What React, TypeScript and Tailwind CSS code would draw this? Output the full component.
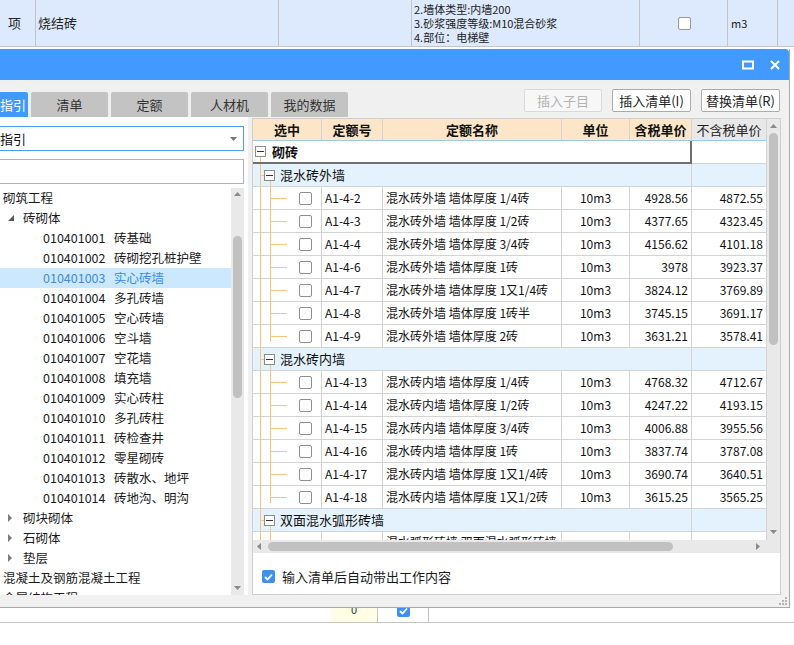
import React from 'react';

type Row = { code: string; name: string; unit: string; tax: string; noTax: string; tall?: boolean };

const codes: [string, string][] = [
  ['010401001', '砖基础'],
  ['010401002', '砖砌挖孔桩护壁'],
  ['010401003', '实心砖墙'],
  ['010401004', '多孔砖墙'],
  ['010401005', '空心砖墙'],
  ['010401006', '空斗墙'],
  ['010401007', '空花墙'],
  ['010401008', '填充墙'],
  ['010401009', '实心砖柱'],
  ['010401010', '多孔砖柱'],
  ['010401011', '砖检查井'],
  ['010401012', '零星砌砖'],
  ['010401013', '砖散水、地坪'],
  ['010401014', '砖地沟、明沟'],
];

const groups: { name: string; rows: Row[] }[] = [
  {
    name: '混水砖外墙',
    rows: [
      { code: 'A1-4-2', name: '混水砖外墙 墙体厚度 1/4砖', unit: '10m3', tax: '4928.56', noTax: '4872.55' },
      { code: 'A1-4-3', name: '混水砖外墙 墙体厚度 1/2砖', unit: '10m3', tax: '4377.65', noTax: '4323.45' },
      { code: 'A1-4-4', name: '混水砖外墙 墙体厚度 3/4砖', unit: '10m3', tax: '4156.62', noTax: '4101.18' },
      { code: 'A1-4-6', name: '混水砖外墙 墙体厚度 1砖', unit: '10m3', tax: '3978', noTax: '3923.37' },
      { code: 'A1-4-7', name: '混水砖外墙 墙体厚度 1又1/4砖', unit: '10m3', tax: '3824.12', noTax: '3769.89' },
      { code: 'A1-4-8', name: '混水砖外墙 墙体厚度 1砖半', unit: '10m3', tax: '3745.15', noTax: '3691.17' },
      { code: 'A1-4-9', name: '混水砖外墙 墙体厚度 2砖', unit: '10m3', tax: '3631.21', noTax: '3578.41' },
    ],
  },
  {
    name: '混水砖内墙',
    rows: [
      { code: 'A1-4-13', name: '混水砖内墙 墙体厚度 1/4砖', unit: '10m3', tax: '4768.32', noTax: '4712.67' },
      { code: 'A1-4-14', name: '混水砖内墙 墙体厚度 1/2砖', unit: '10m3', tax: '4247.22', noTax: '4193.15' },
      { code: 'A1-4-15', name: '混水砖内墙 墙体厚度 3/4砖', unit: '10m3', tax: '4006.88', noTax: '3955.56' },
      { code: 'A1-4-16', name: '混水砖内墙 墙体厚度 1砖', unit: '10m3', tax: '3837.74', noTax: '3787.08' },
      { code: 'A1-4-17', name: '混水砖内墙 墙体厚度 1又1/4砖', unit: '10m3', tax: '3690.74', noTax: '3640.51' },
      { code: 'A1-4-18', name: '混水砖内墙 墙体厚度 1又1/2砖', unit: '10m3', tax: '3615.25', noTax: '3565.25' },
    ],
  },
  {
    name: '双面混水弧形砖墙',
    rows: [
      {
        code: 'A1-4-20',
        name: '混水弧形砖墙 双面混水弧形砖墙 墙体厚度 1砖',
        unit: '10m3',
        tax: '4210.33',
        noTax: '4155.20',
        tall: true,
      },
    ],
  },
];

const LINE = '#f7c47c';

const MinusBox = () => (
  <div className="flex h-[11px] w-[11px] shrink-0 items-center justify-center border border-[#8c8c8c] bg-white">
    <div className="h-px w-[7px] bg-[#333]" />
  </div>
);

const Check = ({ checked }: { checked?: boolean }) =>
  checked ? (
    <div className="flex h-[13px] w-[13px] shrink-0 items-center justify-center rounded-[2px] bg-[#3f8ff0]">
      <svg width="9" height="8" viewBox="0 0 9 8">
        <path d="M1 4 L3.5 6.5 L8 1.5" stroke="white" strokeWidth="1.8" fill="none" />
      </svg>
    </div>
  ) : (
    <div className="h-[13px] w-[13px] shrink-0 rounded-[2px] border border-[#8f8f8f] bg-white" />
  );

const DataRow = ({ row, last }: { row: Row; last: boolean }) => (
  <div
    className={
      row.tall
        ? 'flex h-[40px] shrink-0 border-b border-[#d3d3d3] bg-white text-[12px] text-[#111]'
        : 'flex h-[23px] shrink-0 border-b border-[#d3d3d3] bg-white text-[12px] text-[#111]'
    }
  >
    <div className="relative flex w-[69px] items-center border-r border-[#d3d3d3] pl-[46px]">
      <svg className="absolute left-0 top-0" width="68" height="40">
        <line x1="7.5" y1="0" x2="7.5" y2="40" stroke={LINE} />
        <line x1="17.5" y1="0" x2="17.5" y2={last ? 11.5 : 40} stroke={LINE} />
        <line x1="17.5" y1={row.tall ? 20 : 11.5} x2="34" y2={row.tall ? 20 : 11.5} stroke={LINE} />
      </svg>
      <Check />
    </div>
    <div className="flex w-[61px] items-center border-r border-[#d3d3d3] pl-[3px]">{row.code}</div>
    <div
      className={
        row.tall
          ? 'flex w-[179px] items-start overflow-hidden border-r border-[#d3d3d3] pl-[3px] pt-[2px] leading-[15px]'
          : 'flex w-[179px] items-center overflow-hidden whitespace-nowrap border-r border-[#d3d3d3] pl-[3px]'
      }
    >
      {row.name}
    </div>
    <div className="flex w-[68px] items-center justify-center border-r border-[#d3d3d3]">{row.unit}</div>
    <div className="flex w-[62px] items-center justify-end border-r border-[#d3d3d3] pr-[3px]">{row.tax}</div>
    <div className="flex w-[75px] items-center justify-end border-r border-[#d3d3d3] pr-[3px]">{row.noTax}</div>
  </div>
);

const GroupRow = ({ name }: { name: string }) => (
  <div className="flex h-[23px] shrink-0 border-b border-[#d3d3d3] bg-[#e4f2fd] text-[13px] text-[#111]">
    <div className="relative flex w-[439px] items-center border-r border-[#d3d3d3] pl-[11px]">
      <svg className="absolute left-0 top-0" width="40" height="22">
        <line x1="7.5" y1="0" x2="7.5" y2="22" stroke={LINE} />
        <line x1="7.5" y1="11.5" x2="11" y2="11.5" stroke={LINE} />
        <line x1="17.5" y1="17" x2="17.5" y2="22" stroke={LINE} />
      </svg>
      <MinusBox />
      <span className="ml-[5px]">{name}</span>
    </div>
    <div className="w-[75px] border-r border-[#d3d3d3]" />
  </div>
);

const TreeArrowOpen = () => (
  <svg width="6" height="6" viewBox="0 0 6 6" className="shrink-0">
    <path d="M6 0 L6 6 L0 6 Z" fill="#595959" />
  </svg>
);

const TreeArrowClosed = () => (
  <svg width="4" height="8" viewBox="0 0 4 8" className="shrink-0">
    <path d="M0 0 L4 4 L0 8 Z" fill="#7a7a7a" />
  </svg>
);

const LeftPanel = () => (
  <div className="flex h-full w-[248px] flex-col bg-white">
    <div className="mt-[9px] flex h-[25px] w-[244px] items-center justify-between border border-l-0 border-[#4a9df2] pr-[6px] text-[13px] text-[#111]">
      <span>指引</span>
      <svg width="7" height="4" viewBox="0 0 7 4">
        <path d="M0 0 L7 0 L3.5 4 Z" fill="#777" />
      </svg>
    </div>
    <div className="mt-[8px] h-[25px] w-[244px] border border-l-0 border-[#b4b4b4] bg-white" />
    <div className="mt-[4px] flex min-h-0 w-[244px] flex-1">
      <div className="min-w-0 flex-1 overflow-hidden text-[12.5px] text-[#1a1a1a]">
        <div className="flex h-[20px] items-center pl-[3px]">砌筑工程</div>
        <div className="flex h-[20px] items-center pl-[8px]">
          <TreeArrowOpen />
          <span className="ml-[9px]">砖砌体</span>
        </div>
        {codes.map(([c, n]) => (
          <div
            key={c}
            className={
              c === '010401003'
                ? 'flex h-[20px] items-center bg-[#cce8ff] pl-[43px] text-[#3a8de2]'
                : 'flex h-[20px] items-center pl-[43px]'
            }
          >
            <span className="w-[71px] shrink-0">{c}</span>
            <span className="whitespace-nowrap">{n}</span>
          </div>
        ))}
        {['砌块砌体', '石砌体', '垫层'].map((t) => (
          <div key={t} className="flex h-[20px] items-center pl-[8px]">
            <TreeArrowClosed />
            <span className="ml-[11px]">{t}</span>
          </div>
        ))}
        <div className="flex h-[20px] items-center whitespace-nowrap pl-[3px]">混凝土及钢筋混凝土工程</div>
        <div className="flex h-[20px] items-center whitespace-nowrap pl-[3px]">金属结构工程</div>
      </div>
      <div className="flex w-[13px] flex-col items-center bg-[#e9e9e9]">
        <svg width="7" height="4" viewBox="0 0 7 4" className="mt-[4px]">
          <path d="M0 4 L7 4 L3.5 0 Z" fill="#8a8a8a" />
        </svg>
        <div className="mt-[40px] h-[162px] w-[9px] rounded-full bg-[#c1c1c1]" />
        <div className="flex-1" />
        <svg width="7" height="4" viewBox="0 0 7 4" className="mb-[5px]">
          <path d="M0 0 L7 0 L3.5 4 Z" fill="#8a8a8a" />
        </svg>
      </div>
    </div>
  </div>
);

const HeaderCell = ({ w, children, plain }: { w: string; children: React.ReactNode; plain?: boolean }) => (
  <div
    className={
      plain
        ? `${w} flex items-center justify-center border-r border-[#d3d3d3] bg-[#e8e8e8] text-[13px] text-[#222]`
        : `${w} flex items-center justify-center border-r border-[#d3d3d3] bg-[#fde6c8] text-[13px] font-bold text-[#111]`
    }
  >
    {children}
  </div>
);

const RightPanel = () => (
  <div className="mt-[1px] flex w-[529px] flex-col border border-[#cfcfcf] bg-white">
    <div className="flex h-[421px] shrink-0">
      <div className="flex w-[514px] flex-col overflow-hidden">
        <div className="flex h-[22px] shrink-0 border-b border-[#9cc9f3]">
          <HeaderCell w="w-[69px]">选中</HeaderCell>
          <HeaderCell w="w-[61px]">定额号</HeaderCell>
          <HeaderCell w="w-[179px]">定额名称</HeaderCell>
          <HeaderCell w="w-[68px]">单位</HeaderCell>
          <HeaderCell w="w-[62px]">含税单价</HeaderCell>
          <HeaderCell w="w-[75px]" plain>
            不含税单价
          </HeaderCell>
        </div>
        <div className="flex h-[23px] shrink-0 bg-white">
          <div className="relative flex w-[439px] items-center border-b-2 border-r-2 border-[#6f6f6f] pl-[2px]">
            <svg className="absolute left-0 top-0" width="20" height="21">
              <line x1="7.5" y1="16" x2="7.5" y2="21" stroke={LINE} />
            </svg>
            <MinusBox />
            <span className="ml-[6px] text-[13px] font-bold text-[#111]">砌砖</span>
          </div>
          <div className="w-[75px] border-b border-r border-[#d3d3d3]" />
        </div>
        {groups.map((g) => (
          <React.Fragment key={g.name}>
            <GroupRow name={g.name} />
            {g.rows.map((r, i) => (
              <DataRow key={r.code} row={r} last={i === g.rows.length - 1 && g.rows.length > 1} />
            ))}
          </React.Fragment>
        ))}
      </div>
      <div className="flex w-[13px] flex-col items-center bg-[#e9e9e9]">
        <svg width="7" height="4" viewBox="0 0 7 4" className="mt-[5px]">
          <path d="M0 4 L7 4 L3.5 0 Z" fill="#8a8a8a" />
        </svg>
        <div className="mt-[5px] h-[212px] w-[9px] rounded-full bg-[#c1c1c1]" />
        <div className="flex-1" />
        <svg width="7" height="4" viewBox="0 0 7 4" className="mb-[6px]">
          <path d="M0 0 L7 0 L3.5 4 Z" fill="#8a8a8a" />
        </svg>
      </div>
    </div>
    <div className="flex h-[13px] shrink-0 items-center bg-[#e9e9e9]">
      <svg width="4" height="7" viewBox="0 0 4 7" className="ml-[4px]">
        <path d="M4 0 L4 7 L0 3.5 Z" fill="#8a8a8a" />
      </svg>
      <div className="ml-[7px] h-[9px] w-[405px] rounded-full bg-[#c1c1c1]" />
      <div className="flex-1" />
      <svg width="4" height="7" viewBox="0 0 4 7" className="mr-[20px]">
        <path d="M0 0 L0 7 L4 3.5 Z" fill="#8a8a8a" />
      </svg>
    </div>
    <div className="flex flex-1 items-center gap-[7px] pl-[9px] pt-[6px] text-[13px] text-[#1a1a1a]">
      <Check checked />
      <span>输入清单后自动带出工作内容</span>
    </div>
  </div>
);

const Tab = ({ label }: { label: string }) => (
  <div className="flex h-[25px] w-[77px] items-center justify-center rounded-t-[2px] bg-[#c3c3c3] text-[13px] text-[#333]">
    {label}
  </div>
);

const Btn = ({ label, disabled }: { label: string; disabled?: boolean }) => (
  <div
    className={
      disabled
        ? 'flex h-[23px] w-[78px] items-center justify-center rounded-[2px] border border-[#dadada] bg-[#f7f7f7] text-[13px] text-[#b3b3b3]'
        : 'flex h-[23px] w-[79px] items-center justify-center rounded-[2px] border border-[#acacac] bg-white text-[13px] text-[#222]'
    }
  >
    {label}
  </div>
);

export default function App() {
  return (
    <div className="relative h-[645px] w-[794px] overflow-hidden bg-white font-['Noto_Sans_CJK_SC',sans-serif]">
      {/* background sheet */}
      <div className="flex h-[47px] border-b border-[#c4c4c4] bg-[#dde9fc] text-[#222]">
        <div className="flex w-[36px] items-center border-r border-[#c4c4c4] pl-[8px] text-[13px]">项</div>
        <div className="flex w-[243px] items-center border-r border-[#c4c4c4] pl-[2px] text-[13px]">烧结砖</div>
        <div className="w-[133px] border-r border-[#c4c4c4]" />
        <div className="flex w-[228px] flex-col justify-center border-r border-[#c4c4c4] pl-[2px] text-[11px] leading-[14px]">
          <span>2.墙体类型:内墙200</span>
          <span>3.砂浆强度等级:M10混合砂浆</span>
          <span>4.部位：电梯壁</span>
        </div>
        <div className="flex w-[88px] items-center justify-center border-r border-[#c4c4c4]">
          <div className="ml-[2px] h-[13px] w-[13px] rounded-[2px] border border-[#999] bg-white" />
        </div>
        <div className="flex w-[50px] items-center border-r border-[#c4c4c4] pl-[3px] text-[11px]">m3</div>
        <div className="flex-1" />
      </div>
      <div className="h-[553px]" />
      <div className="flex h-[23px] border-b border-[#c4c4c4] text-[11px] text-[#333]">
        <div className="w-[331px]" />
        <div className="flex w-[47px] items-end justify-center border-r border-[#c4c4c4] bg-[#fffde6] pb-[5px]">0</div>
        <div className="flex w-[51px] items-end justify-center border-r border-[#c4c4c4] pb-[5px]">
          <Check checked />
        </div>
      </div>

      {/* dialog */}
      <div className="absolute left-0 top-[49px] flex h-[559px] w-[790px] flex-col border-b border-r border-[#a9a9a9] bg-[#f0f0f0]">
        <div className="flex h-[31px] shrink-0 items-center justify-end rounded-tr-[4px] bg-[#4299ff] pr-[9px]">
          <svg width="12" height="10" viewBox="0 0 12 10" className="mr-[16px]">
            <rect x="1" y="1.5" width="10" height="7" stroke="white" strokeWidth="2" fill="none" />
          </svg>
          <svg width="10" height="10" viewBox="0 0 10 10">
            <path d="M1 1 L9 9 M9 1 L1 9" stroke="white" strokeWidth="2" />
          </svg>
        </div>
        <div className="flex h-[37px] shrink-0 justify-between pr-[9px]">
          <div className="flex items-end gap-[3px]">
            <div className="flex h-[25px] w-[28px] items-center rounded-tr-[2px] bg-[#4299ff] text-[13px] text-white">
              指引
            </div>
            <Tab label="清单" />
            <Tab label="定额" />
            <Tab label="人材机" />
            <Tab label="我的数据" />
          </div>
          <div className="mt-[9px] flex gap-[10px]">
            <Btn label="插入子目" disabled />
            <Btn label="插入清单(I)" />
            <Btn label="替换清单(R)" />
          </div>
        </div>
        <div className="flex h-[478px] shrink-0 gap-[4px]">
          <LeftPanel />
          <RightPanel />
        </div>
        <div className="flex flex-1 items-end justify-end pb-[2px] pr-[2px]">
          <svg width="8" height="8" viewBox="0 0 8 8">
            <rect x="6" y="0" width="2" height="2" fill="#b5b5b5" />
            <rect x="3" y="3" width="2" height="2" fill="#b5b5b5" />
            <rect x="6" y="3" width="2" height="2" fill="#b5b5b5" />
            <rect x="0" y="6" width="2" height="2" fill="#b5b5b5" />
            <rect x="3" y="6" width="2" height="2" fill="#b5b5b5" />
            <rect x="6" y="6" width="2" height="2" fill="#b5b5b5" />
          </svg>
        </div>
      </div>
    </div>
  );
}
